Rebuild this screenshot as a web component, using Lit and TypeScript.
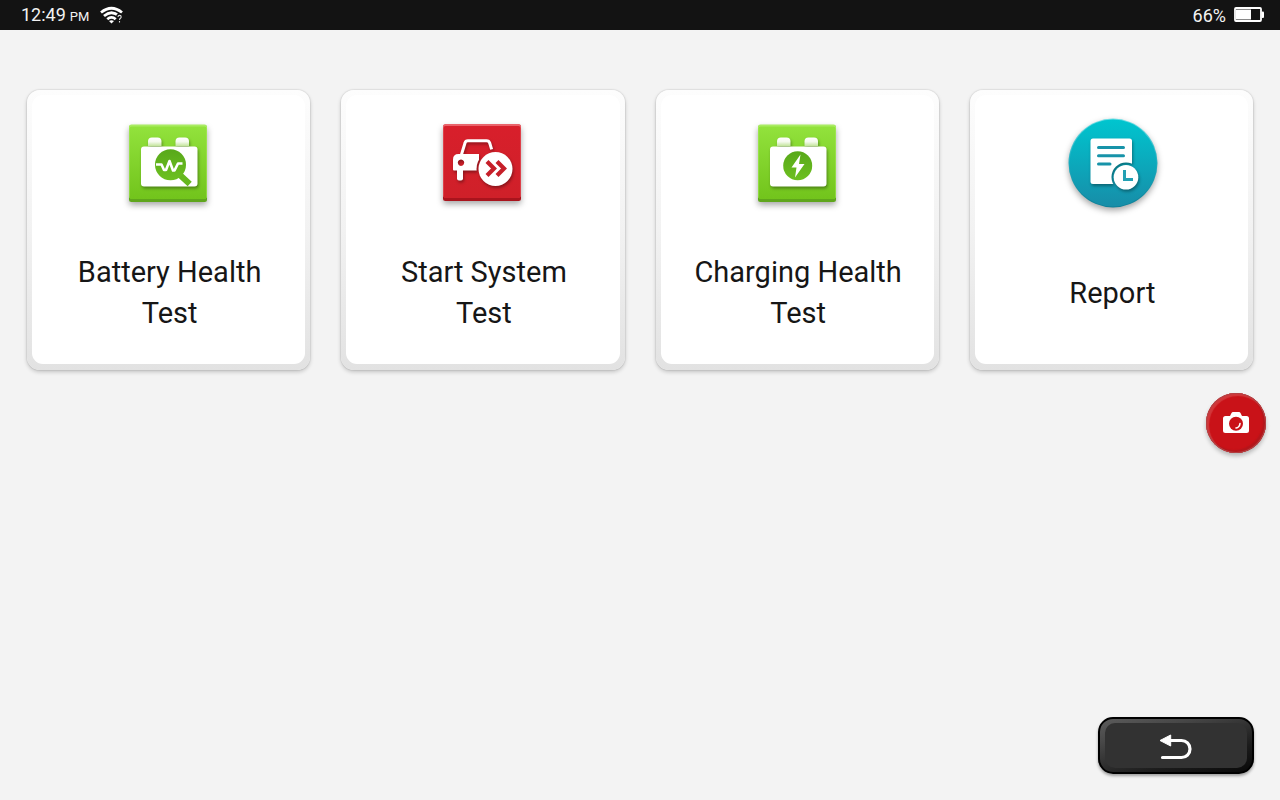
import { LitElement, html, css, svg } from "lit";
import { customElement, property } from "lit/decorators.js";

const greenTile = svg`
  <defs>
    <linearGradient id="green" x1="0" y1="0" x2="0" y2="1">
      <stop offset="0" stop-color="#92e23c" /><stop offset="1" stop-color="#72c41c" />
    </linearGradient>
    <linearGradient id="cap" x1="0" y1="0" x2="0" y2="1">
      <stop offset="0" stop-color="#fff" /><stop offset=".5" stop-color="#f4faec" /><stop offset="1" stop-color="#c4e59c" />
    </linearGradient>
    <linearGradient id="lens" x1="0" y1="0" x2="0" y2="1">
      <stop offset="0" stop-color="#58a81a" /><stop offset="1" stop-color="#6dc020" />
    </linearGradient>
  </defs>
  <rect class="drop" x="11" y="11" width="78" height="77" rx="2.5" fill="#5fa61c" />
  <rect x="11" y="10.500" width="78" height="74" rx="2.5" fill="#a9ec62" />
  <rect x="11.500" y="12.500" width="77" height="72.500" rx="2" fill="url(#green)" />
  <g class="glyph">
    <path d="M30 32v-4.500q0-4 4-4h5.500q4 0 4 4V32z" fill="url(#cap)" />
    <path d="M57.500 32v-4.500q0-4 4-4H67q4 0 4 4V32z" fill="url(#cap)" />
    <rect x="23" y="32.500" width="56.500" height="40" rx="3" fill="#fff" />
  </g>`;

const icons: Record<string, unknown> = {
  battery: svg`${greenTile}
    <path d="M62 61l7.500 7" stroke="#66b81f" stroke-width="6" stroke-linecap="square" />
    <circle cx="52.500" cy="50.700" r="15.500" fill="url(#lens)" />
    <path d="M38 50.500h5.500l2.500 5.500h2L51.500 47l3.500 9.500h1.500L60 49.500h4.500" fill="none" stroke="#fff" stroke-width="2.600" stroke-linejoin="round" />`,
  charging: svg`${greenTile}
    <circle cx="50.700" cy="51.700" r="14.500" fill="url(#lens)" />
    <path d="M53.500 40.500L44.500 53.500h5L48 63.500 57.500 50H52z" fill="#fff" />`,
  start: svg`
    <defs>
      <linearGradient id="red" x1="0" y1="0" x2="0" y2="1">
        <stop offset="0" stop-color="#d81f2b" /><stop offset="1" stop-color="#cf2029" />
      </linearGradient>
      <mask id="car-cut" maskUnits="userSpaceOnUse" x="0" y="0" width="100" height="100">
        <rect width="100" height="100" fill="#fff" /><circle cx="63.500" cy="55" r="19" fill="#000" />
      </mask>
    </defs>
    <rect class="drop" x="11" y="10.500" width="78" height="76.500" rx="2.500" fill="#a9141d" />
    <rect x="11" y="10" width="78" height="73.500" rx="2.500" fill="#e9636a" />
    <rect x="11.500" y="12" width="77" height="72" rx="2" fill="url(#red)" />
    <g class="glyph">
      <path d="M29.500 40.500L33 29q.5-2.300 3-2.300h18.500q2.500 0 3.200 2.300l1.500 5" fill="none" stroke="#fff" stroke-width="3" stroke-linecap="square" />
      <g mask="url(#car-cut)">
        <path fill-rule="evenodd" d="M26.500 40H47v16.500H22q-1 0-1-1v-10q0-5.500 5.500-5.500zM29 45.500a3.200 3.200 0 1 0 .01 0z" fill="#fff" />
      </g>
      <path d="M25 56h6v8.500q0 2-2 2h-2q-2 0-2-2z" fill="#fff" />
      <circle cx="63.500" cy="55" r="17" fill="#fff" />
    </g>
    <path d="M55 47.500l7 7-7 7M65 47.500l7 7-7 7" fill="none" stroke="#c61f29" stroke-width="4.200" />`,
  report: svg`
    <defs>
      <linearGradient id="teal" x1="0" y1="0" x2="0" y2="1">
        <stop offset="0" stop-color="#00c5cf" /><stop offset="1" stop-color="#178da8" />
      </linearGradient>
      <linearGradient id="rim" x1="0" y1="0" x2="0" y2="1">
        <stop offset="0" stop-color="#6bdfe5" /><stop offset=".5" stop-color="#1daec0" /><stop offset="1" stop-color="#0d7f97" />
      </linearGradient>
      <mask id="page-cut" maskUnits="userSpaceOnUse" x="0" y="0" width="100" height="100">
        <rect width="100" height="100" fill="#fff" /><circle cx="65" cy="63" r="14.500" fill="#000" />
      </mask>
    </defs>
    <circle class="drop" cx="52" cy="49" r="44.500" fill="url(#rim)" />
    <circle cx="52" cy="49" r="43.500" fill="url(#teal)" />
    <g class="glyph">
      <g mask="url(#page-cut)"><rect x="29.500" y="24.500" width="41.500" height="45.500" rx="2.500" fill="#fff" /></g>
      <circle cx="65" cy="63.300" r="12.300" fill="#fff" />
    </g>
    <path d="M37.500 33.500H62.500M37.500 41.700H62.500M37.500 50h11.500" stroke="#1793a9" stroke-width="3" stroke-linecap="round" />
    <path d="M63.500 56V65.500H72" fill="none" stroke="#23a0b3" stroke-width="3" />`,
};

@customElement("test-card")
export class TestCard extends LitElement {
  @property() label = "";
  @property() icon = "";

  static styles = css`
    :host { display: block; }
    .card {
      display: flex; flex-direction: column; align-items: center;
      width: 100%; height: 280px; box-sizing: border-box;
      padding: 24px 31px 14px 30px; margin: 0; border: 0; border-radius: 13px;
      font: 29px/41px Roboto, sans-serif; color: #161616; cursor: pointer;
      background: linear-gradient(#fdfdfd, #f2f2f2 50%, #e2e2e2);
      box-shadow: 0 0 1px 1px rgba(0, 0, 0, 0.06), 0 2px 4px rgba(0, 0, 0, 0.2);
      position: relative;
    }
    .card::before {
      content: ""; position: absolute; inset: 5px 5px 6px;
      border-radius: 11px; background: #fff;
    }
    .icon { position: relative; width: 100px; height: 100px; flex: none; overflow: visible; }
    .label { position: relative; flex: 1; display: flex; align-items: center; text-align: center; padding: 16px 0 0 3px; }
    .drop { filter: drop-shadow(0 3px 3px rgba(0, 0, 0, 0.35)); }
    .glyph { filter: drop-shadow(1px 2px 1.5px rgba(0, 0, 0, 0.35)); }
  `;

  render() {
    return html`<button class="card">
      <svg class="icon" viewBox="0 0 100 100" aria-hidden="true">${icons[this.icon]}</svg>
      <span class="label">${this.label}</span>
    </button>`;
  }
}

@customElement("app-root")
export class AppRoot extends LitElement {
  private cards = [
    { label: "Battery Health Test", icon: "battery" },
    { label: "Start System Test", icon: "start" },
    { label: "Charging Health Test", icon: "charging" },
    { label: "Report", icon: "report" },
  ];

  static styles = css`
    :host {
      display: flex; flex-direction: column; min-height: 100vh;
      background: #f3f3f3; font-family: Roboto, sans-serif; position: relative;
    }
    .status {
      display: flex; justify-content: space-between; align-items: center;
      height: 30px; padding: 0 16px 0 21px; background: #131313; color: #f2f2f2;
      font-size: 18px; line-height: 30px;
    }
    .group { display: flex; align-items: center; height: 30px; }
    .level { padding-top: 2px; }
    .clock { display: flex; align-items: baseline; gap: 4px; padding-top: 2px; }
    .meridiem { font-size: 13px; }
    .wifi { margin-left: 11px; }
    .battery { margin-left: 8px; }
    .grid {
      flex: 1; display: grid; align-content: start;
      grid-template-columns: repeat(4, 1fr); gap: 31px; padding: 60px 27px;
    }
    .footer { display: flex; justify-content: flex-end; padding: 0 26px 26px; }
    .back {
      display: grid; place-items: center; width: 156px; height: 57px; padding: 2px 0 0;
      border: 2px solid #000; border-radius: 15px; cursor: pointer; position: relative;
      background: linear-gradient(165deg, #5c5c5c, #484848 25%, #1c1c1c 70%, #080808);
      box-shadow: 0 2px 3px rgba(0, 0, 0, 0.35);
    }
    .back::before {
      content: ""; position: absolute; inset: 4px 5px;
      border-radius: 10px; background: #323232;
    }
    .back svg { position: relative; }
    .camera {
      position: absolute; right: 14px; top: 393px; width: 60px; height: 60px;
      display: grid; place-items: center; padding: 0; border: 0; border-radius: 50%;
      background: #c91218; cursor: pointer;
      box-shadow: inset 0 0 0 1px #b04446, inset 2px 2px 1px 1px #d2373a,
        inset -2px -2px 1px 1px #b4161b, 0 3px 4px rgba(0, 0, 0, 0.25);
    }
  `;

  render() {
    return html`
      <header class="status">
        <div class="group">
          <span class="clock"><span>12:49</span> <span class="meridiem">PM</span></span>
          <svg class="wifi" width="24" height="18" viewBox="0 0 24 18" role="img" aria-label="Wi-Fi">
            <g fill="none" stroke="#fff" stroke-width="2.800">
              <path d="M1 6.500Q11.500-2 22 6.500" />
              <path d="M4 10Q11.500 3.500 19 10" />
              <path d="M7.300 13.300Q11.500 9.500 15.700 13.300" />
            </g>
            <path d="M9 15q2.500-1.500 5 0L11.500 17.500z" fill="#fff" />
            <path d="M17.500 11q0-2 2-2t2 2q0 1-1.200 1.800-.8.500-.8 1.400M19.500 15.200v1.600" fill="none" stroke="#131313" stroke-width="3" />
            <path d="M18 11q0-1.600 1.600-1.600t1.600 1.600q0 .8-1 1.500-.7.500-.7 1.400M19.500 15v1.400" fill="none" stroke="#ddd" stroke-width="1.100" />
          </svg>
        </div>
        <div class="group">
          <span class="level">66%</span>
          <svg class="battery" width="30" height="16" viewBox="0 0 30 16" role="img" aria-label="Battery">
            <rect x="1" y="1" width="26" height="13" rx="1" fill="none" stroke="#fff" stroke-width="1.800" />
            <rect x="2" y="2.500" width="15" height="10" fill="#fff" />
            <rect x="27.500" y="4.500" width="2.500" height="6.500" rx="1" fill="#fff" />
          </svg>
        </div>
      </header>
      <main class="grid">
        ${this.cards.map((c) => html`<test-card .label=${c.label} .icon=${c.icon}></test-card>`)}
      </main>
      <footer class="footer">
        <button class="back" aria-label="Back">
          <svg width="34" height="28" viewBox="0 0 34 28" aria-hidden="true">
            <path d="M10 7.500h12.500a8.500 8.500 0 0 1 0 17H3.500" fill="none" stroke="#fff" stroke-width="3.200" stroke-linecap="round" />
            <path d="M1 7.500L11.700 2v11z" fill="#fff" stroke="#fff" stroke-width="1" stroke-linejoin="round" />
          </svg>
        </button>
      </footer>
      <button class="camera" aria-label="Take screenshot">
        <svg width="26" height="22" viewBox="0 0 26 22" aria-hidden="true">
          <path d="M2.500 4H7l1.500-3Q9 0 10 0h6q1 0 1.500 1L19 4h4.500Q26 4 26 6.500v12q0 2.500-2.500 2.500h-21Q0 21 0 18.500v-12Q0 4 2.500 4z" fill="#fff" />
          <circle cx="13" cy="11.700" r="7" fill="#c91218" />
          <path d="M17 11.500q-.5 4-4 4.500" fill="none" stroke="#fff" stroke-width="1.600" stroke-linecap="round" />
        </svg>
      </button>
    `;
  }
}
